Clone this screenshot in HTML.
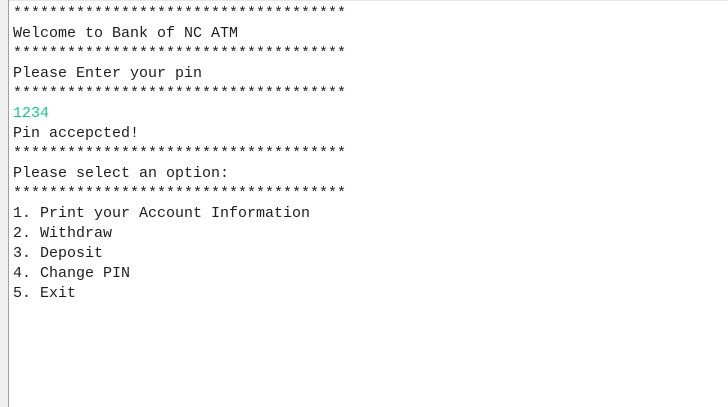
<!DOCTYPE html>
<html><head><style>
html,body{margin:0;padding:0;width:728px;height:407px;background:#fff;overflow:hidden}
.strip{position:absolute;left:0;top:0;width:8px;height:407px;background:#f0f0f0}
.bd{position:absolute;left:8px;top:0;width:1px;height:407px;background:#a0a0a0}
.tp{position:absolute;left:9px;top:0;width:719px;height:1px;background:#e6e6e6}
pre{position:absolute;left:13px;top:4px;margin:0;font-family:"Liberation Mono",monospace;font-size:15px;line-height:20px;color:#1e1e1e}
.g{color:#16c68c}
</style></head><body>
<div class="strip"></div><div class="bd"></div><div class="tp"></div>
<pre>*************************************
Welcome to Bank of NC ATM
*************************************
Please Enter your pin
*************************************
<span class="g">1234</span>
Pin accepcted!
*************************************
Please select an option:
*************************************
1. Print your Account Information
2. Withdraw
3. Deposit
4. Change PIN
5. Exit</pre>
</body></html>
